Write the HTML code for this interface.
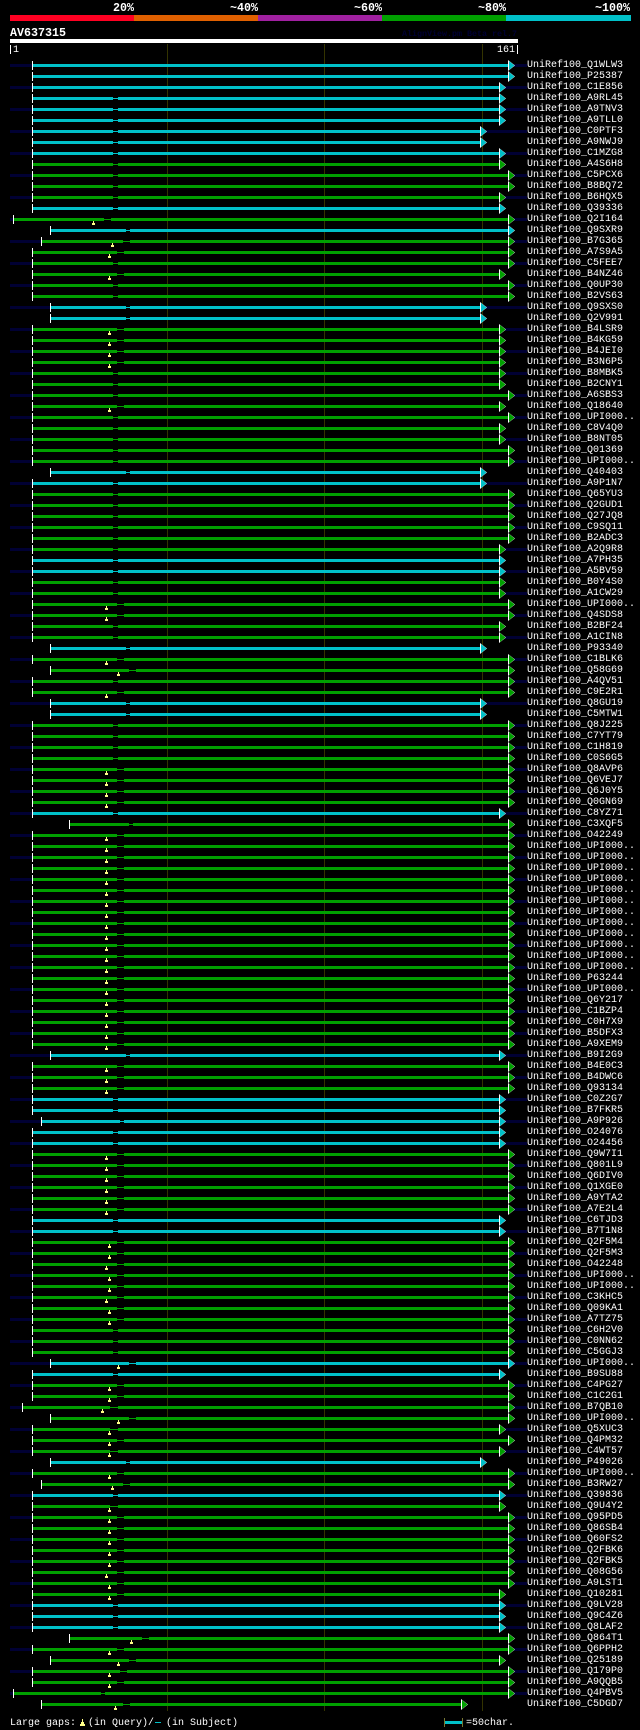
<!DOCTYPE html>
<html>
<head>
<meta charset="utf-8">
<title>AV637315</title>
<style>
html,body{margin:0;padding:0;background:#000;}
body{position:relative;width:640px;height:1730px;overflow:hidden;color:#fff;font-family:"Liberation Mono",monospace;font-size:10px;line-height:11px;}
.t{position:absolute;white-space:pre;}
.b{font-weight:bold;font-size:11.67px;line-height:12px;}
.k{position:absolute;}
#R{position:absolute;left:0;top:60px;width:640px;}
#R>div{
 --c:#00a000;--s:32px;--a:117px;--b:124px;--e:508px;--m:0px;--y:transparent;--n:transparent;
 position:relative;height:11px;width:640px;padding-left:527px;box-sizing:border-box;white-space:pre;overflow:visible;
 background:
  linear-gradient(#fff,#fff) var(--s) 1px/1px 9px no-repeat,
  linear-gradient(var(--c),var(--c)) calc(var(--s) + 1px) 4px/calc(var(--a) - var(--s) - 1px) 3px no-repeat,
  linear-gradient(var(--c),var(--c)) var(--a) 5px/calc(var(--b) - var(--a)) 1px no-repeat,
  linear-gradient(var(--c),var(--c)) var(--b) 4px/calc(var(--e) - var(--b)) 3px no-repeat,
  linear-gradient(var(--y),var(--y)) var(--m) 7px/1px 2px no-repeat,
  linear-gradient(var(--y),var(--y)) calc(var(--m) - 1px) 9px/3px 2px no-repeat,
  linear-gradient(var(--n),var(--n)) 10px 4px/calc(var(--s) - 10px) 3px no-repeat,
  linear-gradient(var(--n),var(--n)) calc(var(--e) + 6px) 4px/calc(521px - var(--e)) 3px no-repeat;
}
#R>div:nth-child(odd){--n:#000033;}
#R>div::before{content:"";position:absolute;left:var(--e);top:0;width:7px;height:11px;background:#fff;clip-path:polygon(0 0,100% 50%,0 100%);}
#R>div::after{content:"";position:absolute;left:calc(var(--e) + 1px);top:1px;width:5.5px;height:9px;background:var(--c);clip-path:polygon(0 0,100% 50%,0 100%);}
#R>div.c{--c:#00c0c8;}
#R>div.s13{--s:13px;}#R>div.s22{--s:22px;}#R>div.s41{--s:41px;}#R>div.s50{--s:50px;}#R>div.s69{--s:69px;}
#R>div.e499{--e:499px;}#R>div.e480{--e:480px;}#R>div.e461{--e:461px;}
#R>div.n{--a:var(--e);--b:var(--e);}
#R>div.A{--a:113px;--b:118px;}
#R>div.C{--a:126px;--b:130px;}
#R>div.D{--a:129px;--b:136px;}
#R>div.E{--a:123px;--b:130px;}
#R>div.F{--a:110px;--b:118px;}
#R>div.G{--a:129px;--b:133px;}
#R>div.H{--a:120px;--b:124px;}
#R>div.I{--a:104px;--b:111px;}
#R>div.J{--a:142px;--b:149px;}
#R>div.K{--a:120px;--b:127px;}
#R>div.L{--a:101px;--b:105px;}
#R>div.m93{--m:93px;--y:#ffff88;}#R>div.m102{--m:102px;--y:#ffff88;}#R>div.m106{--m:106px;--y:#ffff88;}
#R>div.m109{--m:109px;--y:#ffff88;}#R>div.m112{--m:112px;--y:#ffff88;}#R>div.m115{--m:115px;--y:#ffff88;}
#R>div.m118{--m:118px;--y:#ffff88;}#R>div.m131{--m:131px;--y:#ffff88;}
</style>
</head>
<body>
<div class="t b" style="left:113px;top:2px">20%</div>
<div class="t b" style="left:230px;top:2px">~40%</div>
<div class="t b" style="left:354px;top:2px">~60%</div>
<div class="t b" style="left:478px;top:2px">~80%</div>
<div class="t b" style="left:595px;top:2px">~100%</div>
<div class="k" style="left:10px;top:15px;width:124px;height:6px;background:#ff0022"></div>
<div class="k" style="left:134px;top:15px;width:124px;height:6px;background:#e06000"></div>
<div class="k" style="left:258px;top:15px;width:124px;height:6px;background:#a020a0"></div>
<div class="k" style="left:382px;top:15px;width:124px;height:6px;background:#00a000"></div>
<div class="k" style="left:506px;top:15px;width:125px;height:6px;background:#00c0c8"></div>
<div class="t b" style="left:10px;top:27px">AV637315</div>
<div class="t" style="left:402px;top:29px;font-size:8.33px;font-weight:bold;color:#000033">AlignView.pm Beta rel.7</div>
<div class="k" style="left:10px;top:39px;width:508px;height:4px;background:#fff"></div>
<div class="k" style="left:10px;top:45px;width:1px;height:9px;background:#fff"></div>
<div class="t" style="left:13px;top:45px">1</div>
<div class="t" style="left:497px;top:45px">161</div>
<div class="k" style="left:517px;top:45px;width:1px;height:9px;background:#fff"></div>
<div class="k" style="left:167px;top:44px;width:1px;height:1667px;background:#333300"></div>
<div class="k" style="left:324px;top:44px;width:1px;height:1667px;background:#333300"></div>
<div class="k" style="left:482px;top:44px;width:1px;height:1667px;background:#333300"></div>
<div id="R">
<div class="c n">UniRef100_Q1WLW3</div>
<div class="c n">UniRef100_P25387</div>
<div class="c n e499">UniRef100_C1E856</div>
<div class="c A e499">UniRef100_A9RL45</div>
<div class="c A e499">UniRef100_A9TNV3</div>
<div class="c A e499">UniRef100_A9TLL0</div>
<div class="c A e480">UniRef100_C0PTF3</div>
<div class="c A e480">UniRef100_A9NWJ9</div>
<div class="c A e499">UniRef100_C1MZG8</div>
<div class="A e499">UniRef100_A4S6H8</div>
<div class="A">UniRef100_C5PCX6</div>
<div class="A">UniRef100_B8BQ72</div>
<div class="A e499">UniRef100_B6HQX5</div>
<div class="c A e499">UniRef100_Q39336</div>
<div class="s13 I m93">UniRef100_Q2I164</div>
<div class="c s50 C">UniRef100_Q9SXR9</div>
<div class="s41 E m112">UniRef100_B7G365</div>
<div class="m109">UniRef100_A7S9A5</div>
<div class="A">UniRef100_C5FEE7</div>
<div class="m109 e499">UniRef100_B4NZ46</div>
<div class="A">UniRef100_Q0UP30</div>
<div class="A">UniRef100_B2VS63</div>
<div class="c s50 C e480">UniRef100_Q9SXS0</div>
<div class="c s50 C e480">UniRef100_Q2V991</div>
<div class="m109 e499">UniRef100_B4LSR9</div>
<div class="m109 e499">UniRef100_B4KG59</div>
<div class="m109 e499">UniRef100_B4JEI0</div>
<div class="m109 e499">UniRef100_B3N6P5</div>
<div class="A e499">UniRef100_B8MBK5</div>
<div class="A e499">UniRef100_B2CNY1</div>
<div class="A">UniRef100_A6SBS3</div>
<div class="m109 e499">UniRef100_Q18640</div>
<div class="A">UniRef100_UPI000..</div>
<div class="A e499">UniRef100_C8V4Q0</div>
<div class="A e499">UniRef100_B8NT05</div>
<div class="A">UniRef100_Q01369</div>
<div class="A">UniRef100_UPI000..</div>
<div class="c s50 C e480">UniRef100_Q40403</div>
<div class="c A e480">UniRef100_A9P1N7</div>
<div class="A">UniRef100_Q65YU3</div>
<div class="A">UniRef100_Q2GUD1</div>
<div class="A">UniRef100_Q27JQ8</div>
<div class="A">UniRef100_C9SQ11</div>
<div class="A">UniRef100_B2ADC3</div>
<div class="A e499">UniRef100_A2Q9R8</div>
<div class="c A e499">UniRef100_A7PH35</div>
<div class="c A e499">UniRef100_A5BV59</div>
<div class="A e499">UniRef100_B0Y4S0</div>
<div class="A e499">UniRef100_A1CW29</div>
<div class="m106">UniRef100_UPI000..</div>
<div class="m106">UniRef100_Q4SDS8</div>
<div class="A e499">UniRef100_B2BF24</div>
<div class="A e499">UniRef100_A1CIN8</div>
<div class="c s50 C e480">UniRef100_P93340</div>
<div class="m106">UniRef100_C1BLK6</div>
<div class="s50 D m118">UniRef100_Q58G69</div>
<div class="A">UniRef100_A4QV51</div>
<div class="m106">UniRef100_C9E2R1</div>
<div class="c s50 C e480">UniRef100_Q8GU19</div>
<div class="c s50 C e480">UniRef100_C5MTW1</div>
<div class="A">UniRef100_Q8J225</div>
<div class="A">UniRef100_C7YT79</div>
<div class="A">UniRef100_C1H819</div>
<div class="A">UniRef100_C0S6G5</div>
<div class="m106">UniRef100_Q8AVP6</div>
<div class="m106">UniRef100_Q6VEJ7</div>
<div class="m106">UniRef100_Q6J0Y5</div>
<div class="m106">UniRef100_Q0GN69</div>
<div class="c A e499">UniRef100_C8YZ71</div>
<div class="s69 G">UniRef100_C3XQF5</div>
<div class="m106">UniRef100_O42249</div>
<div class="m106">UniRef100_UPI000..</div>
<div class="m106">UniRef100_UPI000..</div>
<div class="m106">UniRef100_UPI000..</div>
<div class="m106">UniRef100_UPI000..</div>
<div class="m106">UniRef100_UPI000..</div>
<div class="m106">UniRef100_UPI000..</div>
<div class="m106">UniRef100_UPI000..</div>
<div class="m106">UniRef100_UPI000..</div>
<div class="m106">UniRef100_UPI000..</div>
<div class="m106">UniRef100_UPI000..</div>
<div class="m106">UniRef100_UPI000..</div>
<div class="m106">UniRef100_UPI000..</div>
<div class="m106">UniRef100_P63244</div>
<div class="m106">UniRef100_UPI000..</div>
<div class="m106">UniRef100_Q6Y217</div>
<div class="m106">UniRef100_C1BZP4</div>
<div class="m106">UniRef100_C0H7X9</div>
<div class="m106">UniRef100_B5DFX3</div>
<div class="m106">UniRef100_A9XEM9</div>
<div class="c s50 C e499">UniRef100_B9I2G9</div>
<div class="m106">UniRef100_B4E0C3</div>
<div class="m106">UniRef100_B4DWC6</div>
<div class="m106">UniRef100_Q93134</div>
<div class="c A e499">UniRef100_C0Z2G7</div>
<div class="c A e499">UniRef100_B7FKR5</div>
<div class="c s41 H e499">UniRef100_A9P926</div>
<div class="c A e499">UniRef100_O24076</div>
<div class="c A e499">UniRef100_O24456</div>
<div class="m106">UniRef100_Q9W7I1</div>
<div class="m106">UniRef100_Q801L9</div>
<div class="m106">UniRef100_Q6DIV0</div>
<div class="m106">UniRef100_Q1XGE0</div>
<div class="m106">UniRef100_A9YTA2</div>
<div class="m106">UniRef100_A7E2L4</div>
<div class="c A e499">UniRef100_C6TJD3</div>
<div class="c A e499">UniRef100_B7T1N8</div>
<div class="m109">UniRef100_Q2F5M4</div>
<div class="m109">UniRef100_Q2F5M3</div>
<div class="m106">UniRef100_O42248</div>
<div class="m109">UniRef100_UPI000..</div>
<div class="m109">UniRef100_UPI000..</div>
<div class="m106">UniRef100_C3KHC5</div>
<div class="m109">UniRef100_Q09KA1</div>
<div class="m109">UniRef100_A7TZ75</div>
<div class="A">UniRef100_C6H2V0</div>
<div class="A">UniRef100_C0NN62</div>
<div class="A">UniRef100_C5GGJ3</div>
<div class="c s50 D m118">UniRef100_UPI000..</div>
<div class="c A e499">UniRef100_B9SU88</div>
<div class="m109">UniRef100_C4PG27</div>
<div class="m109">UniRef100_C1C2G1</div>
<div class="s22 F m102">UniRef100_B7QB10</div>
<div class="s50 D m118">UniRef100_UPI000..</div>
<div class="F m109 e499">UniRef100_Q5XUC3</div>
<div class="m109">UniRef100_Q4PM32</div>
<div class="F m109 e499">UniRef100_C4WT57</div>
<div class="c s50 C e480">UniRef100_P49026</div>
<div class="m109">UniRef100_UPI000..</div>
<div class="s41 E m112">UniRef100_B3RW27</div>
<div class="c A e499">UniRef100_Q39836</div>
<div class="F m109 e499">UniRef100_Q9U4Y2</div>
<div class="m109">UniRef100_Q95PD5</div>
<div class="m109">UniRef100_Q86SB4</div>
<div class="m109">UniRef100_Q60FS2</div>
<div class="m109">UniRef100_Q2FBK6</div>
<div class="m109">UniRef100_Q2FBK5</div>
<div class="m106">UniRef100_Q08G56</div>
<div class="m109">UniRef100_A9LST1</div>
<div class="m109 e499">UniRef100_Q10281</div>
<div class="c A e499">UniRef100_Q9LV28</div>
<div class="c A e499">UniRef100_Q9C4Z6</div>
<div class="c A e499">UniRef100_Q8LAF2</div>
<div class="s69 J m131">UniRef100_Q864T1</div>
<div class="m109">UniRef100_Q6PPH2</div>
<div class="s50 D m118 e499">UniRef100_Q25189</div>
<div class="K m109">UniRef100_Q179P0</div>
<div class="m109">UniRef100_A9QQB5</div>
<div class="s13 L">UniRef100_Q4PBV5</div>
<div class="s41 E m115 e461">UniRef100_C5DGD7</div>
</div>
<div class="t" style="left:10px;top:1718px">Large gaps:</div>
<div class="k" style="left:82px;top:1719px;width:1px;height:3px;background:#ffff88"></div>
<div class="k" style="left:81px;top:1722px;width:3px;height:2px;background:#ffff88"></div>
<div class="k" style="left:80px;top:1724px;width:5px;height:2px;background:#ffff88"></div>
<div class="t" style="left:88px;top:1718px">(in Query)/</div>
<div class="k" style="left:155px;top:1722px;width:6px;height:1px;background:#00c0c8"></div>
<div class="t" style="left:166px;top:1718px">(in Subject)</div>
<div class="k" style="left:444px;top:1718px;width:1px;height:9px;background:#777733"></div>
<div class="k" style="left:445px;top:1721px;width:17px;height:3px;background:#00c0c8"></div>
<div class="k" style="left:462px;top:1718px;width:1px;height:9px;background:#777733"></div>
<div class="t" style="left:466px;top:1718px">=50char.</div>
</body>
</html>
